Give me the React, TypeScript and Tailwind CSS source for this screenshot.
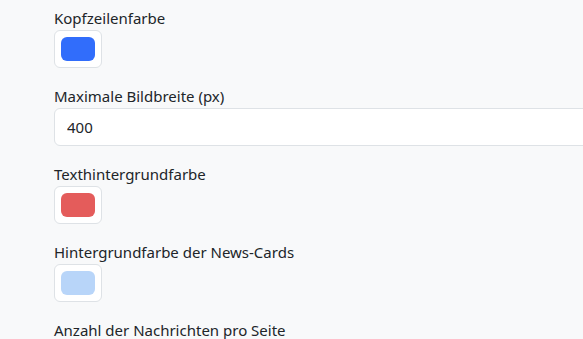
export default function App() {
  const font = { fontFamily: '"Noto Sans", "Open Sans", sans-serif' };

  return (
    <div className="h-screen w-full overflow-hidden bg-[#f8f9fa] text-[#212529]" style={font}>
      <div className="pl-[54px] pt-[7px]">
        <div className="mb-[17px] flex flex-col">
          <label className="mb-px text-[15px] leading-[22px]">Kopfzeilenfarbe</label>
          <ColorBox color="bg-[#316dfb]" />
        </div>

        <div className="mb-[17px] flex flex-col">
          <label className="mb-px text-[15px] leading-[22px]">Maximale Bildbreite (px)</label>
          <input
            type="text"
            defaultValue="400"
            className="h-[38px] w-[600px] rounded-[6px] border border-[#dee2e6] bg-white px-3 text-[15px] text-[#212529] outline-none"
          />
        </div>

        <div className="mb-[17px] flex flex-col">
          <label className="mb-px text-[15px] leading-[22px]">Texthintergrundfarbe</label>
          <ColorBox color="bg-[#e45c5b]" />
        </div>

        <div className="mb-[17px] flex flex-col">
          <label className="mb-px text-[15px] leading-[22px]">Hintergrundfarbe der News-Cards</label>
          <ColorBox color="bg-[#b8d5f9]" />
        </div>

        <div className="flex flex-col">
          <label className="text-[15px] leading-[22px]">Anzahl der Nachrichten pro Seite</label>
        </div>
      </div>
    </div>
  );
}

function ColorBox({ color }: { color: string }) {
  return (
    <div className="h-[38px] w-[48px] rounded-[6px] border border-[#dee2e6] bg-white p-[6px]">
      <div className={`h-full w-full rounded-[6px] ${color}`} />
    </div>
  );
}
